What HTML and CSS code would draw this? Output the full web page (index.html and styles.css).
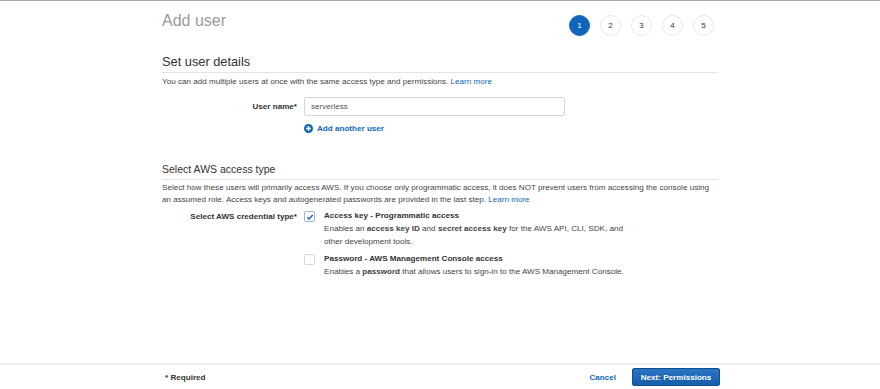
FILE: index.html
```html
<!DOCTYPE html>
<html lang="en">
<head>
  <meta charset="UTF-8" />
  <title>Add user</title>
  <link rel="stylesheet" href="styles.css">
</head>
<body>
  <div class="page">
    <div class="header">
      <h1 class="title">Add user</h1>
      <div class="steps">
        <span class="step active">1</span>
        <span class="step">2</span>
        <span class="step">3</span>
        <span class="step">4</span>
        <span class="step">5</span>
      </div>
    </div>

    <h2 class="section-title">Set user details</h2>
    <p class="section-desc">You can add multiple users at once with the same access type and permissions. <a href="#">Learn more</a></p>

    <div class="form-row">
      <label class="form-label">User name*</label>
      <div class="form-field">
        <input class="text-input" type="text" value="serverless" />
        <a class="add-link" href="#">
          <svg width="9" height="9" viewBox="0 0 10 10"><circle cx="5" cy="5" r="5" fill="#1166bb"/><path d="M5 2.3v5.4M2.3 5h5.4" stroke="#fff" stroke-width="1.6"/></svg>
          Add another user
        </a>
      </div>
    </div>

    <h3 class="section-title small">Select AWS access type</h3>
    <p class="section-desc">Select how these users will primarily access AWS. If you choose only programmatic access, it does NOT prevent users from accessing the console using an assumed role. Access keys and autogenerated passwords are provided in the last step. <a href="#">Learn more</a></p>

    <div class="form-row cred-row">
      <label class="form-label">Select AWS credential type*</label>
      <div class="form-field">
        <div class="option">
          <span class="checkbox checked">
            <svg width="8" height="8" viewBox="0 0 8 8"><path d="M1.3 4.2l1.8 1.8 3.6-4" fill="none" stroke="#1166bb" stroke-width="1.4"/></svg>
          </span>
          <div class="option-text">
            <div class="option-title">Access key - Programmatic access</div>
            <p class="option-desc">Enables an <b>access key ID</b> and <b>secret access key</b> for the AWS API, CLI, SDK, and other development tools.</p>
          </div>
        </div>
        <div class="option">
          <span class="checkbox"></span>
          <div class="option-text">
            <div class="option-title">Password - AWS Management Console access</div>
            <p class="option-desc">Enables a <b>password</b> that allows users to sign-in to the AWS Management Console.</p>
          </div>
        </div>
      </div>
    </div>
  </div>

  <div class="footer">
    <div class="footer-inner">
      <span class="required">* Required</span>
      <div class="actions">
        <a class="cancel" href="#">Cancel</a>
        <button class="primary-btn">Next: Permissions</button>
      </div>
    </div>
  </div>
</body>
</html>
```

FILE: styles.css
```css
:root {
  --text-color: #444444;
  --heading-color: #333333;
  --muted-color: #9a9a9a;
  --link-color: #1166bb;
  --font-family: 'Liberation Sans', Arial, sans-serif;
}

* {
  box-sizing: border-box;
  margin: 0;
  padding: 0;
}

html, body {
  height: 100%;
}

body {
  font-family: var(--font-family);
  font-size: 8.1px;
  color: var(--text-color);
  background: #ffffff;
  border-top: 1px solid #aaaaaa;
  display: flex;
  flex-direction: column;
  overflow: hidden;
}

a {
  color: var(--link-color);
  text-decoration: none;
}

.page {
  width: 556px;
  margin: 0 auto;
}

.header {
  display: flex;
  justify-content: space-between;
  align-items: flex-start;
}

.title {
  font-size: 16px;
  font-weight: 400;
  color: var(--muted-color);
  line-height: 20px;
  margin-top: 10px;
}

.steps {
  display: flex;
  gap: 10px;
  margin-top: 14px;
  margin-right: 4px;
}

.step {
  width: 21px;
  height: 21px;
  border-radius: 50%;
  border: 1px solid #e6e6e6;
  display: flex;
  align-items: center;
  justify-content: center;
  font-size: 8px;
  color: #333333;
}

.step.active {
  background: #1166bb;
  border-color: #1166bb;
  color: #ffffff;
}

.section-title {
  font-size: 12.8px;
  font-weight: 400;
  color: var(--heading-color);
  line-height: 16px;
  padding-bottom: 2px;
  border-bottom: 1px solid #e4e4e4;
  margin-top: 18px;
}

.section-title.small {
  font-size: 10.5px;
  line-height: 14px;
  padding-bottom: 3px;
  margin-top: 27px;
}

.section-desc {
  line-height: 12px;
  margin-top: 2px;
}

.section-title + .section-desc {
  margin-top: 3px;
}

.section-title.small + .section-desc {
  margin-top: 2px;
}

.form-row {
  display: grid;
  grid-template-columns: 135px 1fr;
  column-gap: 7px;
  margin-top: 9px;
}

.form-label {
  text-align: right;
  font-weight: 700;
  color: var(--heading-color);
  line-height: 19px;
}

.cred-row {
  margin-top: 4px;
}

.cred-row .form-label {
  line-height: 13px;
}

.text-input {
  display: block;
  width: 261px;
  height: 19px;
  border: 1px solid #d5d5d5;
  border-radius: 2px;
  padding: 0 6px;
  font-family: var(--font-family);
  font-size: 8.1px;
  color: #555555;
}

.add-link {
  display: inline-flex;
  align-items: center;
  gap: 4px;
  margin-top: 7px;
  font-weight: 700;
  line-height: 11px;
}

.option {
  display: flex;
  gap: 9px;
}

.option + .option {
  margin-top: 5px;
}

.checkbox {
  flex: none;
  width: 11px;
  height: 11px;
  margin-top: 1px;
  border: 1px solid #d8d8d8;
  border-radius: 2px;
  display: flex;
  align-items: center;
  justify-content: center;
}

.checkbox.checked {
  border-color: #9fb6d2;
}

.option-text {
  line-height: 13px;
  width: 310px;
}

.option-title {
  font-weight: 700;
  color: var(--heading-color);
  line-height: 12px;
}

.footer {
  margin-top: auto;
  border-top: 2px solid #eeeeee;
}

.footer-inner {
  width: 560px;
  margin: 0 auto;
  height: 24px;
  display: flex;
  align-items: center;
  justify-content: space-between;
  padding-left: 5px;
}

.required {
  font-weight: 700;
  color: var(--heading-color);
}

.actions {
  display: flex;
  align-items: center;
  gap: 16px;
}

.cancel {
  font-weight: 700;
}

.primary-btn {
  width: 88px;
  height: 18px;
  border: 1px solid #0f4f8f;
  border-radius: 2px;
  background: linear-gradient(#2b75c2, #135da9);
  color: #ffffff;
  font-family: var(--font-family);
  font-size: 8.1px;
  font-weight: 700;
}
```
